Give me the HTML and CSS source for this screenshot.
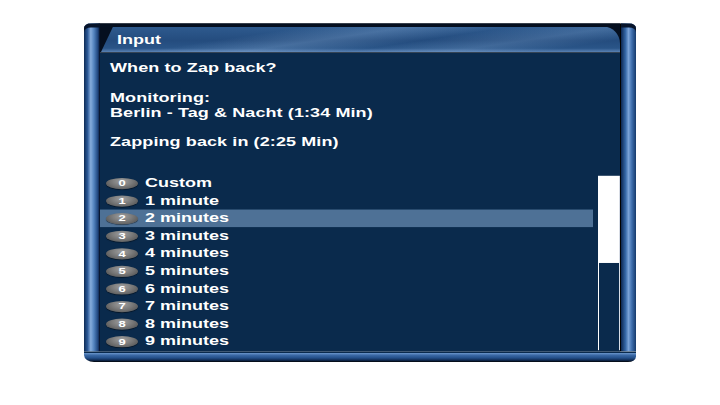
FILE: index.html
```html
<!DOCTYPE html>
<html>
<head>
<meta charset="utf-8">
<title>Input</title>
<link rel="stylesheet" href="styles.css">
</head>
<body>
<div class="stage">
  <div class="window">
    <div class="pillar pillar-left"></div>
    <div class="main">
      <div class="titlebar">
        <div class="tab"><span class="title">Input</span></div>
      </div>
      <div class="content">
        <div class="message">
          <div class="line">When to Zap back?</div>
          <div class="line">&nbsp;</div>
          <div class="line">Monitoring:</div>
          <div class="line">Berlin - Tag &amp; Nacht (1:34 Min)</div>
          <div class="line">&nbsp;</div>
          <div class="line">Zapping back in (2:25 Min)</div>
        </div>
        <div class="listarea">
          <div class="list">
            <div class="row"><span class="badge">0</span><span class="label">Custom</span></div>
            <div class="row"><span class="badge">1</span><span class="label">1 minute</span></div>
            <div class="row selected"><span class="badge">2</span><span class="label">2 minutes</span></div>
            <div class="row"><span class="badge">3</span><span class="label">3 minutes</span></div>
            <div class="row"><span class="badge">4</span><span class="label">4 minutes</span></div>
            <div class="row"><span class="badge">5</span><span class="label">5 minutes</span></div>
            <div class="row"><span class="badge">6</span><span class="label">6 minutes</span></div>
            <div class="row"><span class="badge">7</span><span class="label">7 minutes</span></div>
            <div class="row"><span class="badge">8</span><span class="label">8 minutes</span></div>
            <div class="row"><span class="badge">9</span><span class="label">9 minutes</span></div>
          </div>
          <div class="scrollbar"><div class="thumb"></div></div>
        </div>
      </div>
    </div>
    <div class="pillar pillar-right"></div>
    <div class="bottombar"></div>
  </div>
</div>
</body>
</html>
```
FILE: styles.css
```css
html, body {
  margin: 0;
  padding: 0;
  background: #ffffff;
  overflow: hidden;
}
body {
  width: 720px;
  height: 405px;
  font-family: "Liberation Sans", Arial, sans-serif;
  font-weight: bold;
  color: #ffffff;
}
.stage {
  width: 720px;
  height: 576px;
  margin-bottom: -171px;
  transform: scaleY(0.703125);
  transform-origin: 0 0;
  padding-top: 33px;
  box-sizing: border-box;
}
.window {
  margin-left: 84px;
  width: 552px;
  height: 482px;
  display: grid;
  grid-template-columns: 16px 1fr 16px;
  grid-template-rows: 1fr 15px;
}
.pillar {
  background: linear-gradient(90deg, #0e2b55 0%, #2b5896 22%, #86acdc 42%, #5383bf 62%, #1d427a 88%, #02081a 100%);
  box-shadow: inset 0 6px 0 #07142a;
}
.pillar-left {
  border-radius: 7px 0 0 0;
}
.pillar-right {
  border-left: 1px solid #000000;
  border-radius: 0 7px 0 0;
  background: linear-gradient(90deg, #0c2650 0%, #3567a6 30%, #7aa2d6 50%, #3f6fae 72%, #163a6c 100%);
}
.main {
  display: flex;
  flex-direction: column;
  min-width: 0;
}
.titlebar {
  height: 42px;
  background: #050f1f;
  padding-top: 5px;
  box-sizing: border-box;
}
.tab {
  height: 36px;
  border-top-right-radius: 16px 24px;
  clip-path: polygon(13px 0, 100% 0, 100% 100%, 1px 100%);
  background:
    linear-gradient(168deg, rgba(255,255,255,0) 30%, rgba(150,185,225,0.28) 45%, rgba(255,255,255,0) 60%, rgba(150,185,225,0.22) 75%, rgba(255,255,255,0) 88%),
    linear-gradient(180deg, #2e5a8e 0%, #244c7e 55%, #2a5588 85%, #5a82b4 100%);
  padding: 2px 0 0 17px;
  box-sizing: border-box;
}
.title {
  display: block;
  font-size: 18px;
  line-height: 34px;
}
.content {
  flex: 1;
  background: #0a2a4c;
  padding-top: 12px;
}
.message {
  padding-left: 10px;
  font-size: 18px;
  line-height: 21px;
  letter-spacing: 0.1px;
}
.line {
  white-space: nowrap;
}
.listarea {
  margin-top: 35px;
  display: flex;
  gap: 5px;
}
.list {
  width: 493px;
  display: flex;
  flex-direction: column;
}
.row {
  height: 25px;
  display: flex;
  align-items: center;
  gap: 7px;
  padding-left: 6px;
  font-size: 18px;
}
.row.selected {
  background: #4e7196;
}
.badge {
  width: 32px;
  height: 16px;
  border-radius: 50%;
  background: radial-gradient(ellipse at 50% 30%, #a0a0a0 0%, #7a7a7a 45%, #474747 100%);
  box-shadow: 0 1px 1px rgba(0,0,0,0.6);
  display: flex;
  align-items: center;
  justify-content: center;
  font-size: 13px;
  line-height: 16px;
  color: #ffffff;
}
.label {
  white-space: nowrap;
}
.scrollbar {
  width: 22px;
  height: 248px;
  margin-top: 2px;
  border-left: 1px solid #ffffff;
  border-right: 1px solid #d8dde6;
  box-sizing: border-box;
}
.thumb {
  height: 124px;
  background: #ffffff;
}
.bottombar {
  grid-column: 1 / 4;
  background: linear-gradient(180deg, #0a2a4c 0%, #0a2a4c 10%, #6a96cc 14%, #3a68a4 35%, #24508a 60%, #0f2a52 82%, #000000 100%);
  border-radius: 0 0 8px 10px;
}
```
